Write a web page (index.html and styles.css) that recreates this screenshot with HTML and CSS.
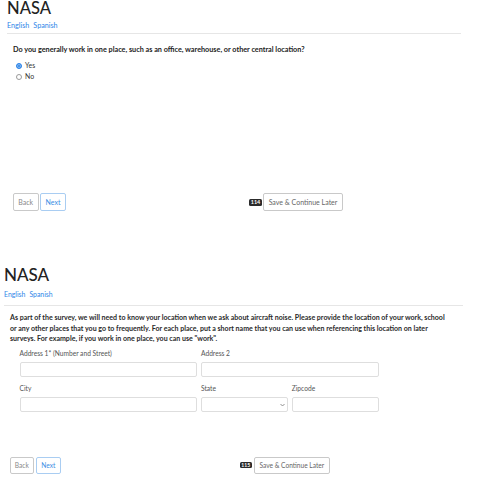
FILE: index.html
```html
<!DOCTYPE html>
<html>
	<head>
		<meta charset="utf-8">
		<title>NASA survey</title>
		<link rel="stylesheet" href="styles.css">
	</head>
	<body>
		<!-- step 114 -->
		<div class="page page-one">
			<h1 class="brand">NASA</h1>
			<div class="langs"><a href="#">English</a><a href="#">Spanish</a></div>
			<hr class="rule">
			<div class="question">
				<p class="prompt">Do you generally work in one place, such as an office, warehouse, or other central location?</p>
				<label class="choice"><span class="radio checked"></span>Yes</label>
				<label class="choice"><span class="radio"></span>No</label>
			</div>
			<div class="nav">
				<div class="steps">
					<button class="btn btn-back">Back</button>
					<button class="btn btn-next">Next</button>
				</div>
				<div class="save">
					<span class="badge">114</span>
					<button class="btn btn-save">Save &amp; Continue Later</button>
				</div>
			</div>
		</div>

		<!-- step 115 -->
		<div class="page page-two">
			<h1 class="brand">NASA</h1>
			<div class="langs"><a href="#">English</a><a href="#">Spanish</a></div>
			<hr class="rule">
			<p class="intro">As part of the survey, we will need to know your location when we ask about aircraft noise. Please provide the location of your work, school or any other places that you go to frequently. For each place, put a short name that you can use when referencing this location on later surveys. For example, if you work in one place, you can use "work".</p>
			<div class="form">
				<div class="field wide">
					<label>Address 1* (Number and Street)</label>
					<input class="input" type="text">
				</div>
				<div class="field wide">
					<label>Address 2</label>
					<input class="input" type="text">
				</div>
				<div class="field wide">
					<label>City</label>
					<input class="input" type="text">
				</div>
				<div class="field">
					<label>State</label>
					<div class="input select">
						<svg width="5" height="4" viewBox="0 0 5 4"><path d="M0.5 1 L2.5 3 L4.5 1" fill="none" stroke="#777" stroke-width="0.8"/></svg>
					</div>
				</div>
				<div class="field">
					<label>Zipcode</label>
					<input class="input" type="text">
				</div>
			</div>
			<div class="nav">
				<div class="steps">
					<button class="btn btn-back">Back</button>
					<button class="btn btn-next">Next</button>
				</div>
				<div class="save">
					<span class="badge">115</span>
					<button class="btn btn-save">Save &amp; Continue Later</button>
				</div>
			</div>
		</div>
	</body>
</html>
```
FILE: styles.css
```css
*{
	margin: 0;
	padding: 0;
	box-sizing: border-box;
}
body{
	background: #fff;
	font-family: Lato, "Open Sans", sans-serif;
	color: #222;
}
a{
	color: #2f86e8;
	text-decoration: none;
}
.brand{
	font-weight: 500;
	color: #222;
	line-height: 20px;
}
.langs a{
	margin-right: 4px;
}
.rule{
	border: 0;
	border-top: 1px solid #e6e6e6;
}

/* first step */
.page-one{
	height: 265px;
	padding: 0 25px 0 7px;
}
.page-one .brand{
	font-size: 16.5px;
	line-height: 17px;
}
.page-one .langs{
	margin-top: 4px;
	font-size: 7.2px;
	line-height: 10px;
}
.page-one .rule{
	margin-top: 2px;
}
.prompt{
	margin: 11px 0 5px 6px;
	font-size: 7.25px;
	font-weight: bold;
	line-height: 10px;
	color: #222;
}
.choice{
	display: flex;
	align-items: center;
	gap: 3px;
	padding-left: 9px;
	font-size: 6.9px;
	line-height: 11px;
	color: #333;
}
.radio{
	width: 6px;
	height: 6px;
	border: 1px solid #9a9a9a;
	border-radius: 50%;
	background: #fff;
}
.radio.checked{
	border-color: #2f86e8;
	background: #2f86e8;
	box-shadow: inset 0 0 0 1px #8fbef2;
}
.page-one .nav{
	margin-top: 111px;
	grid-template-columns: 236px auto;
	padding-left: 6px;
}

/* shared nav */
.nav{
	display: grid;
	align-items: center;
}
.steps, .save{
	display: flex;
	align-items: center;
}
.btn{
	background: #fff;
	border: 1px solid #c9c9c9;
	border-radius: 2px;
	font-family: Lato, "Open Sans", sans-serif;
	color: #888;
	cursor: pointer;
}
.btn-next{
	border-color: #a9cdf2;
	color: #3b8de4;
}
.btn-save{
	color: #666;
}
.badge{
	background: #2b2b2b;
	color: #fff;
	font-weight: bold;
	text-align: center;
	border-radius: 1.5px;
}
.page-one .btn{
	height: 18px;
	font-size: 7px;
}
.page-one .btn-back{
	width: 25.5px;
}
.page-one .btn-next{
	width: 26px;
	margin-left: 1.5px;
}
.page-one .btn-save{
	width: 80px;
	margin-left: 1px;
}
.page-one .badge{
	width: 13px;
	height: 7px;
	font-size: 5.5px;
	line-height: 7px;
}

/* second step */
.page-two{
	padding: 0 23px 0 4px;
}
.page-two .brand{
	font-size: 17px;
}
.page-two .langs{
	margin-top: 4px;
	font-size: 6.9px;
	line-height: 10px;
}
.page-two .rule{
	margin-top: 6px;
}
.intro{
	margin: 7px 0 0 6px;
	width: 440px;
	font-size: 7.05px;
	font-weight: bold;
	line-height: 10.5px;
	color: #2a2a2a;
}
.form{
	display: grid;
	grid-template-columns: repeat(4, 86.75px);
	column-gap: 4px;
	row-gap: 7.5px;
	margin: 4px 0 0 15.5px;
}
.field{
	display: flex;
	flex-direction: column;
}
.field.wide{
	grid-column: span 2;
}
.field label{
	font-size: 6.65px;
	line-height: 9px;
	color: #555;
	margin-bottom: 4px;
}
.input{
	height: 15px;
	border: 1px solid #dedede;
	border-radius: 2px;
	background: #fff;
	outline: none;
}
.select{
	display: flex;
	align-items: center;
	justify-content: flex-end;
	padding-right: 2px;
}
.page-two .nav{
	margin-top: 44.5px;
	grid-template-columns: 230px auto;
	padding-left: 5.7px;
}
.page-two .btn{
	height: 17px;
	font-size: 6.6px;
}
.page-two .btn-back{
	width: 24.3px;
}
.page-two .btn-next{
	width: 24.7px;
	margin-left: 2px;
}
.page-two .btn-save{
	width: 75.7px;
	margin-left: 2.3px;
}
.page-two .badge{
	width: 12px;
	height: 6.5px;
	font-size: 5px;
	line-height: 6.5px;
}
```
